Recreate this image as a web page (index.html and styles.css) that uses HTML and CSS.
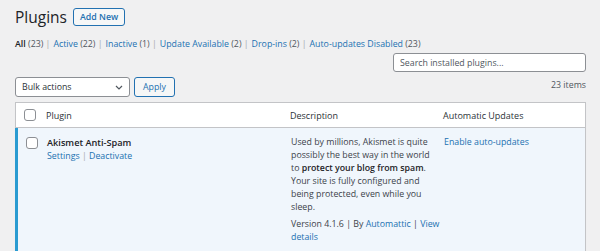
FILE: index.html
```html
<!DOCTYPE html>
<html>
<head>
<meta charset="utf-8">
<link rel="stylesheet" href="styles.css">
</head>
<body>
<div class="wrap">
  <div class="head">
    <h1 class="title">Plugins</h1>
    <a class="btn addnew">Add New</a>
  </div>
  <ul class="filters">
    <li><a class="cur">All</a> <span class="count">(23)</span> |</li>
    <li><a>Active <span class="count">(22)</span></a> |</li>
    <li><a>Inactive <span class="count">(1)</span></a> |</li>
    <li><a>Update Available <span class="count">(2)</span></a> |</li>
    <li><a>Drop-ins <span class="count">(2)</span></a> |</li>
    <li><a>Auto-updates Disabled <span class="count">(23)</span></a></li>
  </ul>
  <div class="searchrow">
    <input class="search" type="text" placeholder="Search installed plugins...">
  </div>
  <div class="nav">
    <div class="actions">
      <div class="select">Bulk actions
        <svg class="chev" width="8" height="5" viewBox="0 0 8 5"><path d="M1 1l3 3 3-3" fill="none" stroke="#50575e" stroke-width="1.2"/></svg>
      </div>
      <a class="btn apply">Apply</a>
    </div>
    <div class="items">23 items</div>
  </div>
  <div class="table">
    <div class="thead">
      <div class="cb"><span class="box"></span></div>
      <div class="c-plugin">Plugin</div>
      <div class="c-desc">Description</div>
      <div class="c-auto">Automatic Updates</div>
    </div>
    <div class="row active">
      <div class="cb"><span class="box"></span></div>
      <div class="c-plugin">
        <strong class="pname">Akismet Anti-Spam</strong>
        <div class="rowact"><a>Settings</a> | <a>Deactivate</a></div>
      </div>
      <div class="c-desc">
        <p class="dtext">Used by millions, Akismet is quite possibly the best way in the world to <strong>protect your blog from spam</strong>. Your site is fully configured and being protected, even while you sleep.</p>
        <p class="meta">Version 4.1.6 | By <a>Automattic</a> | <a>View details</a></p>
      </div>
      <div class="c-auto"><a>Enable auto-updates</a></div>
    </div>
  </div>
</div>
</body>
</html>
```
FILE: styles.css
```css
* { box-sizing: border-box; }
html, body { margin: 0; padding: 0; }
body {
  background: #f0f0f1;
  font-family: "Open Sans", "Noto Sans", sans-serif;
  font-size: 8.8px;
  color: #3c434a;
  width: 600px;
  height: 251px;
  overflow: hidden;
}
a { color: #2271b1; text-decoration: none; }
.wrap { padding: 8px 14px 0 15px; }
.head { display: flex; align-items: center; gap: 6px; height: 18px; }
.title {
  margin: 0;
  font-size: 15.5px;
  font-weight: 400;
  color: #1d2327;
  line-height: 18px;
}
.btn {
  display: inline-block;
  border: 1px solid #2271b1;
  border-radius: 3px;
  background: #f6f7f7;
  color: #2271b1;
}
.addnew {
  font-weight: 600;
  height: 18px;
  line-height: 16px;
  padding: 0 6px;
}
.filters {
  list-style: none;
  margin: 11px 0 0;
  padding: 0;
  display: flex;
  gap: 3px;
  color: #a7aaad;
  line-height: 14px;
}
.filters li { white-space: nowrap; }
.filters .cur { color: #1d2327; font-weight: 600; }
.count { color: #50575e; }
.searchrow { display: flex; justify-content: flex-end; margin-top: 2px; }
.search {
  width: 193px;
  height: 19px;
  border: 1px solid #8c8f94;
  border-radius: 3px;
  background: #fff;
  font: inherit;
  padding: 0 6px;
  color: #2c3338;
}
.search::placeholder { color: #50575e; }
.nav { display: flex; justify-content: space-between; align-items: flex-start; margin-top: 5px; }
.actions { display: flex; gap: 4px; align-items: center; }
.select {
  width: 115px;
  height: 20px;
  border: 1px solid #8c8f94;
  border-radius: 3px;
  background: #fff;
  color: #2c3338;
  display: flex;
  align-items: center;
  justify-content: space-between;
  padding: 0 6px 0 6px;
}
.apply { height: 20px; line-height: 18px; padding: 0 8px; }
.items { color: #50575e; line-height: 14px; margin-top: 1px; }
.table {
  margin-top: 5px;
  background: #fff;
  border: 1px solid #c3c4c7;
  box-shadow: 0 1px 1px rgba(0,0,0,.04);
}
.thead, .row { display: flex; }
.thead {
  height: 25px;
  align-items: center;
  border-bottom: 1px solid #c3c4c7;
  color: #2c3338;
  font-size: 9px;
}
.cb { width: 30px; padding-left: 8px; flex: none; }
.box {
  display: block;
  width: 12px;
  height: 12px;
  border: 1px solid #8c8f94;
  border-radius: 3px;
  background: #fff;
}
.c-plugin { width: 244px; flex: none; }
.c-desc { width: 153px; flex: none; padding-right: 4px; }
.c-auto { flex: 1; }
.row {
  background: #f0f6fc;
  border-left: 3px solid #2a9bd1;
  margin-left: -1px;
  padding-top: 8px;
  height: 130px;
}
.row .cb { width: 29px; padding-left: 8px; padding-top: 1px; }
.pname { display: block; color: #1d2327; font-weight: 600; font-size: 9.2px; line-height: 13px; }
.rowact { color: #a7aaad; margin-top: 1px; line-height: 13px; }
.dtext { margin: 0; line-height: 13px; }
.dtext strong { color: #1d2327; font-weight: 600; }
.meta { margin: 4px 0 0; line-height: 13px; color: #3c434a; }
.c-auto a { line-height: 13px; display: block; }
```
